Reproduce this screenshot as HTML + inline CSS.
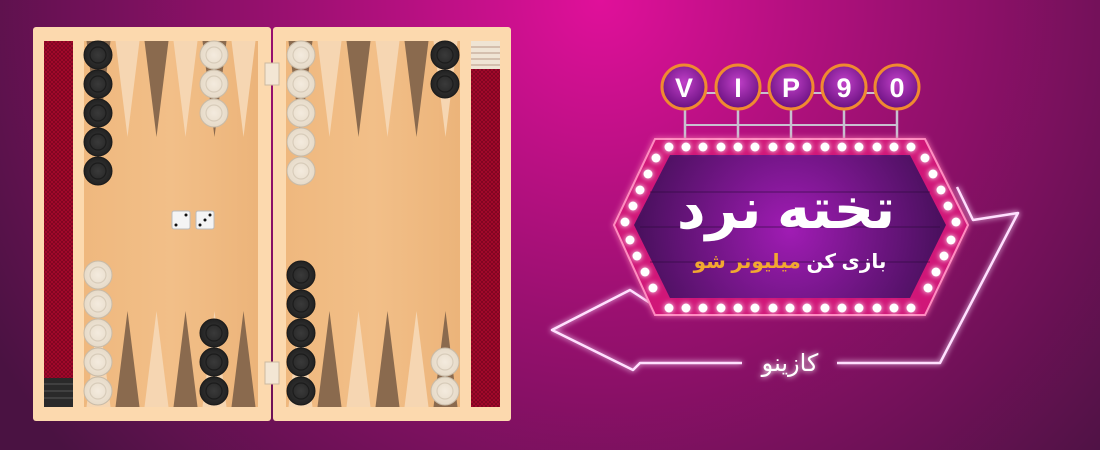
<!DOCTYPE html>
<html><head><meta charset="utf-8"><style>
html,body{margin:0;padding:0;width:1100px;height:450px;overflow:hidden}
</style></head><body>
<svg width="1100" height="450" viewBox="0 0 1100 450" xmlns="http://www.w3.org/2000/svg">
<defs>
<radialGradient id="bg" cx="600" cy="0" r="700" gradientUnits="userSpaceOnUse">
<stop offset="0" stop-color="#e0109a"/><stop offset="0.45" stop-color="#9a1070"/><stop offset="1" stop-color="#4a1242"/>
</radialGradient>
<linearGradient id="wood" x1="0" x2="1"><stop offset="0" stop-color="#efb87e"/><stop offset="0.5" stop-color="#f2bf88"/><stop offset="1" stop-color="#ecb47a"/></linearGradient>
<pattern id="red" width="4" height="4" patternUnits="userSpaceOnUse"><rect width="4" height="4" fill="#a8082c"/><path d="M0 0L4 4M4 0L0 4" stroke="#7a0420" stroke-width="0.8"/></pattern>
<radialGradient id="bk"><stop offset="0" stop-color="#3a3a3a"/><stop offset="1" stop-color="#222"/></radialGradient>
<radialGradient id="wh"><stop offset="0" stop-color="#f4ebde"/><stop offset="1" stop-color="#e6dac8"/></radialGradient>
<radialGradient id="inner" cx="790" cy="230" r="180" gradientUnits="userSpaceOnUse"><stop offset="0" stop-color="#a01cb4"/><stop offset="1" stop-color="#3a0e4e"/></radialGradient>
<radialGradient id="ball" cx="0.5" cy="0.4" r="0.6"><stop offset="0" stop-color="#c040c8"/><stop offset="1" stop-color="#6a1080"/></radialGradient>
<filter id="glow" x="-20%" y="-20%" width="140%" height="140%"><feGaussianBlur stdDeviation="3" result="b"/><feMerge><feMergeNode in="b"/><feMergeNode in="SourceGraphic"/></feMerge></filter>
<g id="B"><circle r="14" fill="url(#bk)" stroke="#1a1a1a"/><circle r="8" fill="none" stroke="#1c1c1c" stroke-width="1.2"/></g>
<g id="W"><circle r="14" fill="url(#wh)" stroke="#c8bba8"/><circle r="8" fill="none" stroke="#d8ccba" stroke-width="1.2"/></g>
<path id="TD" d="M2.5 0h24l-12 96z" fill="#8a6a4e"/>
<path id="TL" d="M2.5 0h24l-12 96z" fill="#f6d6b2"/>
<path id="BD" d="M2.5 0h24l-12 -96z" fill="#8a6a4e"/>
<path id="BL" d="M2.5 0h24l-12 -96z" fill="#f6d6b2"/>
</defs>
<rect width="1100" height="450" fill="url(#bg)"/>

<!-- board -->
<rect x="33" y="27" width="238" height="394" rx="3" fill="#fcd9ae"/>
<rect x="273" y="27" width="238" height="394" rx="3" fill="#fcd9ae"/>
<rect x="44" y="41" width="29" height="366" fill="url(#red)"/>
<rect x="44" y="378" width="29" height="29" fill="#2a2a2a"/>
<path d="M44 384H73M44 391H73M44 398H73" stroke="#555"/>
<rect x="471" y="41" width="29" height="366" fill="url(#red)"/>
<rect x="471" y="41" width="29" height="28" fill="#efe4d4"/>
<path d="M471 47H500M471 53H500M471 59H500M471 65H500" stroke="#b89a88"/>
<rect x="84" y="41" width="174" height="366" fill="url(#wood)"/>
<rect x="286" y="41" width="174" height="366" fill="url(#wood)"/>
<g>
<use href="#TD" x="84" y="41"/><use href="#TL" x="113" y="41"/><use href="#TD" x="142" y="41"/><use href="#TL" x="171" y="41"/><use href="#TD" x="200" y="41"/><use href="#TL" x="229" y="41"/>
<use href="#BL" x="84" y="407"/><use href="#BD" x="113" y="407"/><use href="#BL" x="142" y="407"/><use href="#BD" x="171" y="407"/><use href="#BL" x="200" y="407"/><use href="#BD" x="229" y="407"/>
<use href="#TD" x="286" y="41"/><use href="#TL" x="315" y="41"/><use href="#TD" x="344" y="41"/><use href="#TL" x="373" y="41"/><use href="#TD" x="402" y="41"/><use href="#TL" x="431" y="41"/>
<use href="#BL" x="286" y="407"/><use href="#BD" x="315" y="407"/><use href="#BL" x="344" y="407"/><use href="#BD" x="373" y="407"/><use href="#BL" x="402" y="407"/><use href="#BD" x="431" y="407"/>
</g>
<!-- hinges -->
<rect x="265" y="63" width="14" height="22" fill="#f3e6d4" stroke="#cdb9a0"/>
<rect x="265" y="362" width="14" height="22" fill="#f3e6d4" stroke="#cdb9a0"/>
<!-- checkers -->
<use href="#B" x="98" y="55"/><use href="#B" x="98" y="84"/><use href="#B" x="98" y="113"/><use href="#B" x="98" y="142"/><use href="#B" x="98" y="171"/>
<use href="#W" x="214" y="55"/><use href="#W" x="214" y="84"/><use href="#W" x="214" y="113"/>
<use href="#W" x="98" y="275"/><use href="#W" x="98" y="304"/><use href="#W" x="98" y="333"/><use href="#W" x="98" y="362"/><use href="#W" x="98" y="391"/>
<use href="#B" x="214" y="333"/><use href="#B" x="214" y="362"/><use href="#B" x="214" y="391"/>
<use href="#W" x="301" y="55"/><use href="#W" x="301" y="84"/><use href="#W" x="301" y="113"/><use href="#W" x="301" y="142"/><use href="#W" x="301" y="171"/>
<use href="#B" x="445" y="55"/><use href="#B" x="445" y="84"/>
<use href="#B" x="301" y="275"/><use href="#B" x="301" y="304"/><use href="#B" x="301" y="333"/><use href="#B" x="301" y="362"/><use href="#B" x="301" y="391"/>
<use href="#W" x="445" y="362"/><use href="#W" x="445" y="391"/>
<!-- dice -->
<rect x="172" y="211" width="18" height="18" rx="2" fill="#f4f4f4" stroke="#bbb"/>
<circle cx="176" cy="225" r="1.5" fill="#111"/><circle cx="186" cy="215" r="1.5" fill="#111"/>
<rect x="196" y="211" width="18" height="18" rx="2" fill="#f4f4f4" stroke="#bbb"/>
<circle cx="200" cy="225" r="1.5" fill="#111"/><circle cx="205" cy="220" r="1.5" fill="#111"/><circle cx="210" cy="215" r="1.5" fill="#111"/>

<!-- neon arrow -->
<g fill="none" stroke-width="2.5" stroke-linejoin="round" filter="url(#glow)" style="stroke:#ffe0ff">
<path d="M650 303L630 290L552 330L633 370L640 363H742"/>
<path d="M837 363H940L1018 213L973 220L957 187"/>
</g>
<text x="790" y="371" text-anchor="middle" font-family="'Liberation Sans','DejaVu Sans',sans-serif" font-size="24" fill="#fff" filter="url(#glow)">کازینو</text>

<!-- poles -->
<g stroke="#c8c0d0" stroke-width="2.5">
<path d="M685 100V140M738 100V140M791 100V140M844 100V140M897 100V140"/>
<path d="M685 93H897M685 125H897" stroke-width="2"/>
</g>
<!-- VIP90 -->
<g font-family="'Liberation Sans',sans-serif" font-weight="bold" font-size="27" fill="#fff" text-anchor="middle">
<circle cx="684" cy="87" r="22" fill="url(#ball)" stroke="#f08a30" stroke-width="3"/><text x="684" y="97">V</text>
<circle cx="738" cy="87" r="22" fill="url(#ball)" stroke="#f08a30" stroke-width="3"/><text x="738" y="97">I</text>
<circle cx="791" cy="87" r="22" fill="url(#ball)" stroke="#f08a30" stroke-width="3"/><text x="791" y="97">P</text>
<circle cx="844" cy="87" r="22" fill="url(#ball)" stroke="#f08a30" stroke-width="3"/><text x="844" y="97">9</text>
<circle cx="897" cy="87" r="22" fill="url(#ball)" stroke="#f08a30" stroke-width="3"/><text x="897" y="97">0</text>
</g>
<!-- sign -->
<path d="M655 139H925L968 225L925 315H655L614 225Z" fill="#d01878" stroke="#ff8ac0" stroke-width="2" filter="url(#glow)"/>
<path d="M670 155H910L946 225L910 298H670L634 225Z" fill="url(#inner)"/>
<g stroke="#2a0a3a" stroke-width="1" opacity="0.6"><path d="M650 192H930M640 227H940M650 262H930"/></g>
<g fill="#fff" filter="url(#glow)">
<circle cx="669" cy="147" r="4.5"/><circle cx="686" cy="147" r="4.5"/><circle cx="703" cy="147" r="4.5"/><circle cx="721" cy="147" r="4.5"/><circle cx="738" cy="147" r="4.5"/><circle cx="755" cy="147" r="4.5"/><circle cx="773" cy="147" r="4.5"/><circle cx="790" cy="147" r="4.5"/><circle cx="807" cy="147" r="4.5"/><circle cx="825" cy="147" r="4.5"/><circle cx="842" cy="147" r="4.5"/><circle cx="859" cy="147" r="4.5"/><circle cx="877" cy="147" r="4.5"/><circle cx="894" cy="147" r="4.5"/><circle cx="911" cy="147" r="4.5"/>
<circle cx="669" cy="308" r="4.5"/><circle cx="686" cy="308" r="4.5"/><circle cx="703" cy="308" r="4.5"/><circle cx="721" cy="308" r="4.5"/><circle cx="738" cy="308" r="4.5"/><circle cx="755" cy="308" r="4.5"/><circle cx="773" cy="308" r="4.5"/><circle cx="790" cy="308" r="4.5"/><circle cx="807" cy="308" r="4.5"/><circle cx="825" cy="308" r="4.5"/><circle cx="842" cy="308" r="4.5"/><circle cx="859" cy="308" r="4.5"/><circle cx="877" cy="308" r="4.5"/><circle cx="894" cy="308" r="4.5"/><circle cx="911" cy="308" r="4.5"/>
<circle cx="656" cy="158" r="4.5"/><circle cx="648" cy="174" r="4.5"/><circle cx="640" cy="190" r="4.5"/><circle cx="633" cy="206" r="4.5"/><circle cx="625" cy="222" r="4.5"/><circle cx="630" cy="240" r="4.5"/><circle cx="637" cy="256" r="4.5"/><circle cx="645" cy="272" r="4.5"/><circle cx="653" cy="288" r="4.5"/>
<circle cx="925" cy="158" r="4.5"/><circle cx="933" cy="174" r="4.5"/><circle cx="941" cy="190" r="4.5"/><circle cx="948" cy="206" r="4.5"/><circle cx="956" cy="222" r="4.5"/><circle cx="951" cy="240" r="4.5"/><circle cx="944" cy="256" r="4.5"/><circle cx="936" cy="272" r="4.5"/><circle cx="928" cy="288" r="4.5"/>
</g>
<text x="786" y="228" text-anchor="middle" font-family="'Liberation Sans','DejaVu Sans',sans-serif" font-weight="bold" font-size="56" fill="#fff">تخته نرد</text>
<text x="790" y="268" text-anchor="middle" font-family="'Liberation Sans','DejaVu Sans',sans-serif" font-size="20" font-weight="bold" direction="rtl"><tspan fill="#fff">بازی کن </tspan><tspan fill="#f2a830">میلیونر شو</tspan></text>
</svg>
</body></html>
